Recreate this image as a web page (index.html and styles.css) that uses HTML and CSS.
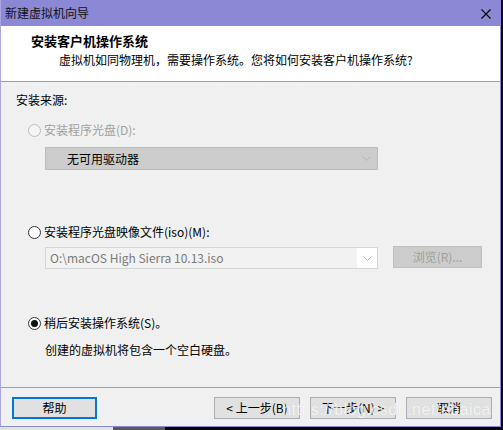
FILE: index.html
```html
<!DOCTYPE html>
<html lang="zh-CN">
<head>
<meta charset="utf-8">
<title>新建虚拟机向导</title>
<link rel="stylesheet" href="styles.css">
</head>
<body>
<div class="screen">
  <div class="window">
    <div class="titlebar">
      <span class="title">新建虚拟机向导</span>
      <svg class="close" width="10" height="10" viewBox="0 0 10 10"><path d="M0.5 0.5L9.5 9.5M9.5 0.5L0.5 9.5" stroke="#000" stroke-width="1.1" fill="none"/></svg>
    </div>
    <div class="header">
      <div class="h-title">安装客户机操作系统</div>
      <div class="h-sub">虚拟机如同物理机，需要操作系统。您将如何安装客户机操作系统?</div>
    </div>
    <div class="content">
      <div class="source-label">安装来源:</div>
      <div class="opt opt1 disabled"><span class="radio"></span><span class="opt-text">安装程序光盘(D):</span></div>
      <div class="select1"><span class="select-text">无可用驱动器</span><svg class="chev" width="9" height="5" viewBox="0 0 9 5"><path d="M0.5 0.5L4.5 4.5L8.5 0.5" stroke="#b4b4b4" fill="none"/></svg></div>
      <div class="opt opt2"><span class="radio"></span><span class="opt-text">安装程序光盘映像文件(iso)(M):</span></div>
      <div class="combo-row">
        <div class="combo"><span class="combo-field">O:\macOS High Sierra 10.13.iso</span><span class="combo-arrow"><svg width="9" height="5" viewBox="0 0 9 5"><path d="M0.5 0.5L4.5 4.5L8.5 0.5" stroke="#b4b4b4" fill="none"/></svg></span></div>
        <div class="browse">浏览(R)...</div>
      </div>
      <div class="opt opt3"><span class="radio checked"><span class="dot"></span></span><span class="opt-text">稍后安装操作系统(S)。</span></div>
      <div class="desc">创建的虚拟机将包含一个空白硬盘。</div>
    </div>
    <div class="footer">
      <div class="btn btn-help">帮助</div>
      <div class="spacer"></div>
      <div class="btn">&lt; 上一步(B)</div>
      <div class="btn">下一步(N) &gt;</div>
      <div class="btn">取消</div>
    </div>
    <div class="watermark">https://blog.csdn.net/ebaicai</div>
  </div>
  <div class="desk-strip">
    <span class="ds-a"></span><span class="ds-b"></span><span class="ds-c"></span>
  </div>
</div>
</body>
</html>
```

FILE: styles.css
```css
* { box-sizing: border-box; }
html, body { margin: 0; padding: 0; }
body {
  background: #0a0a0a;
  font-family: "Noto Sans CJK SC", "Noto Sans", sans-serif;
  font-size: 12px;
  color: #000;
}
.screen {
  width: 503px;
  height: 430px;
  display: flex;
  flex-direction: column;
  overflow: hidden;
}
.window {
  position: relative;
  width: 501px;
  height: 427px;
  border: 1px solid #8b88d6;
  border-top: 0;
  border-left-color: #a9a6e2;
  background: #f0f0f0;
  display: flex;
  flex-direction: column;
}
.titlebar {
  height: 26px;
  background: #8b88d6;
  display: flex;
  align-items: center;
  justify-content: space-between;
  padding: 0 9px 0 4px;
}
.title {
  font-size: 12px;
  line-height: 16px;
  color: #111;
}
.close { display: block; margin-top: 1px; }
.header {
  height: 56px;
  background: #fff;
  border-bottom: 1px solid #a0a0a0;
  padding: 7px 0 0 30px;
}
.h-title {
  font-size: 13px;
  font-weight: bold;
  line-height: 16px;
}
.h-sub {
  margin: 3px 0 0 28px;
  line-height: 16px;
}
.content {
  height: 305px;
  padding-left: 15px;
  display: flex;
  flex-direction: column;
}
.source-label {
  margin-top: 10px;
  line-height: 16px;
}
.opt {
  display: flex;
  align-items: center;
  height: 16px;
  line-height: 16px;
  margin-left: 12px;
}
.opt1 { margin-top: 14px; }
.opt2 { margin-top: 54px; }
.opt3 { margin-top: 46px; }
.opt-text { margin-left: 3px; }
.disabled .opt-text { color: #a0a0a0; }
.radio {
  width: 13px;
  height: 13px;
  border-radius: 50%;
  border: 1px solid #333;
  background: #fff;
  display: flex;
  align-items: center;
  justify-content: center;
}
.disabled .radio {
  border-color: #bcbcbc;
  background: #f4f4f4;
}
.dot {
  width: 7px;
  height: 7px;
  border-radius: 50%;
  background: #111;
}
.select1 {
  margin: 9px 0 0 29px;
  width: 333px;
  height: 23px;
  background: #cccccc;
  border: 1px solid #bcbcbc;
  display: flex;
  align-items: center;
  justify-content: space-between;
  padding: 0 6px 0 21px;
}
.select-text { line-height: 16px; }
.chev { display: block; }
.combo-row {
  margin: 7px 0 0 29px;
  display: flex;
  align-items: center;
  height: 22px;
}
.combo {
  width: 333px;
  height: 22px;
  border: 1px solid #d5d5d5;
  background: #fff;
  display: flex;
}
.combo-field {
  flex: 1;
  background: #f2f2f2;
  color: #7a7a7a;
  padding-left: 4px;
  line-height: 20px;
  font-size: 12px;
}
.combo-arrow {
  width: 20px;
  display: flex;
  align-items: center;
  justify-content: center;
}
.combo-arrow svg { display: block; }
.browse {
  margin-left: 15px;
  width: 89px;
  height: 22px;
  margin-top: -2px;
  background: #cccccc;
  border: 1px solid #bfbfbf;
  color: #a0a0a0;
  text-align: center;
  line-height: 20px;
}
.desc {
  margin: 11px 0 0 29px;
  line-height: 16px;
}
.footer {
  flex: 1;
  border-top: 1px solid #a0a0a0;
  padding: 9px 8px 0 11px;
  display: flex;
  align-items: flex-start;
  gap: 10px;
}
.spacer { flex: 1; }
.btn {
  width: 86px;
  height: 22px;
  background: #e1e1e1;
  border: 1px solid #adadad;
  text-align: center;
  line-height: 20px;
}
.btn-help {
  width: 85px;
  border: 2px solid #0078d7;
  line-height: 18px;
}
.watermark {
  position: absolute;
  right: 5px;
  bottom: 7px;
  font-family: "Liberation Sans", Arial, sans-serif;
  font-size: 16px;
  line-height: 18px;
  color: rgba(255, 255, 255, 0.8);
  text-shadow: 0 0 1px rgba(0, 0, 0, 0.12);
  letter-spacing: 0.5px;
  pointer-events: none;
}
.desk-strip {
  height: 3px;
  display: flex;
}
.ds-a { width: 113px; background: #e2e2e2; }
.ds-b { width: 52px; background: #5a5a5a; }
.ds-c { flex: 1; background: #050505; }
```
